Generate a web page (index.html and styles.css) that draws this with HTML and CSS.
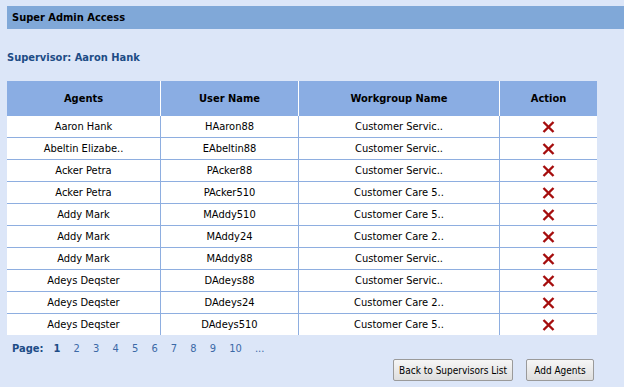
FILE: index.html
```html
<!DOCTYPE html>
<html lang="en">

<head>
    <meta charset="UTF-8">
    <title>Super Admin Access</title>
    <link rel="stylesheet" href="styles.css">
</head>

<body>
    <div class="page">
        <div class="title-bar">Super Admin Access</div>

        <div class="supervisor">Supervisor: Aaron Hank</div>

        <table class="agents">
            <thead>
                <tr>
                    <th class="col-agent">Agents</th>
                    <th class="col-user">User Name</th>
                    <th class="col-group">Workgroup Name</th>
                    <th class="col-action">Action</th>
                </tr>
            </thead>
            <tbody id="rows"></tbody>
        </table>

        <div class="pager">
            <span class="pager-label">Page:</span>
            <a class="current">1</a>
            <a>2</a>
            <a>3</a>
            <a>4</a>
            <a>5</a>
            <a>6</a>
            <a>7</a>
            <a>8</a>
            <a>9</a>
            <a>10</a>
            <a>...</a>
        </div>

        <div class="actions">
            <button class="btn">Back to Supervisors List</button>
            <button class="btn">Add Agents</button>
        </div>
    </div>

    <script>
        // danh sach agent
        const agents = [
            ['Aaron Hank', 'HAaron88', 'Customer Servic..'],
            ['Abeltin Elizabe..', 'EAbeltin88', 'Customer Servic..'],
            ['Acker Petra', 'PAcker88', 'Customer Servic..'],
            ['Acker Petra', 'PAcker510', 'Customer Care 5..'],
            ['Addy Mark', 'MAddy510', 'Customer Care 5..'],
            ['Addy Mark', 'MAddy24', 'Customer Care 2..'],
            ['Addy Mark', 'MAddy88', 'Customer Servic..'],
            ['Adeys Deqster', 'DAdeys88', 'Customer Servic..'],
            ['Adeys Deqster', 'DAdeys24', 'Customer Care 2..'],
            ['Adeys Deqster', 'DAdeys510', 'Customer Care 5..']
        ];

        const removeIcon = '<svg class="remove" width="13" height="12" viewBox="0 0 13 12">' +
            '<path d="M1.5 1 L11.5 11 M11.5 1 L1.5 11" stroke="#a50d0d" stroke-width="2.4" fill="none"/></svg>';

        const tbody = document.getElementById('rows');
        agents.forEach(a => {
            const tr = document.createElement('tr');
            tr.innerHTML = `<td>${a[0]}</td><td>${a[1]}</td><td>${a[2]}</td><td>${removeIcon}</td>`;
            tbody.appendChild(tr);
        });
    </script>
</body>

</html>
```

FILE: styles.css
```css
body {
    margin: 0;
    padding: 0;
    background: #dce6f8;
    font-family: "DejaVu Sans Condensed", "DejaVu Sans", sans-serif;
    font-stretch: condensed;
    font-size: 11px;
    color: #000;
}

.page {
    padding: 6px 0 0 7px;
}

.title-bar {
    height: 23px;
    line-height: 23px;
    padding-left: 5px;
    background: #80a8d8;
    font-weight: bold;
}

.supervisor {
    margin-top: 21px;
    height: 16px;
    line-height: 16px;
    font-weight: bold;
    color: #1d4c86;
}

.agents {
    margin-top: 15px;
    width: 590px;
    border-collapse: collapse;
    table-layout: fixed;
}

.agents th {
    height: 35px;
    padding: 0;
    background: #8aade3;
    border-right: 1px solid #fff;
    font-weight: bold;
    text-align: center;
}

.agents th:last-child {
    border-right: none;
}

.col-agent { width: 153px; }
.col-user { width: 137px; }
.col-group { width: 200px; }
.col-action { width: 97px; }

.agents td {
    height: 21px;
    padding: 0;
    background: #fff;
    border-top: 1px solid #8eaee0;
    border-right: 1px solid #8eaee0;
    text-align: center;
    vertical-align: middle;
}

.agents tbody tr:first-child td {
    border-top: none;
}

.agents td:last-child {
    border-right: none;
}

.remove {
    display: block;
    margin: 0 auto;
}

.pager {
    height: 14px;
    margin-top: 7px;
    padding-left: 5px;
    line-height: 14px;
    color: #3b69a6;
}

.pager-label {
    font-weight: bold;
    color: #1d4c86;
    margin-right: 7px;
}

.pager a {
    display: inline-block;
    margin-right: 10px;
}

.pager a.current {
    font-weight: bold;
    color: #1d4c86;
}

.actions {
    width: 587px;
    display: flex;
    justify-content: flex-end;
    gap: 13px;
    margin-top: 3px;
}

.btn {
    height: 22px;
    min-width: 68px;
    padding: 0 5px;
    font-family: "DejaVu Sans Condensed", "DejaVu Sans", sans-serif;
    font-stretch: condensed;
    font-size: 10px;
    color: #000;
    background: linear-gradient(to bottom, #f6f6f6, #dedede);
    border: 1px solid #9a9a9a;
    border-radius: 2px;
}
```
